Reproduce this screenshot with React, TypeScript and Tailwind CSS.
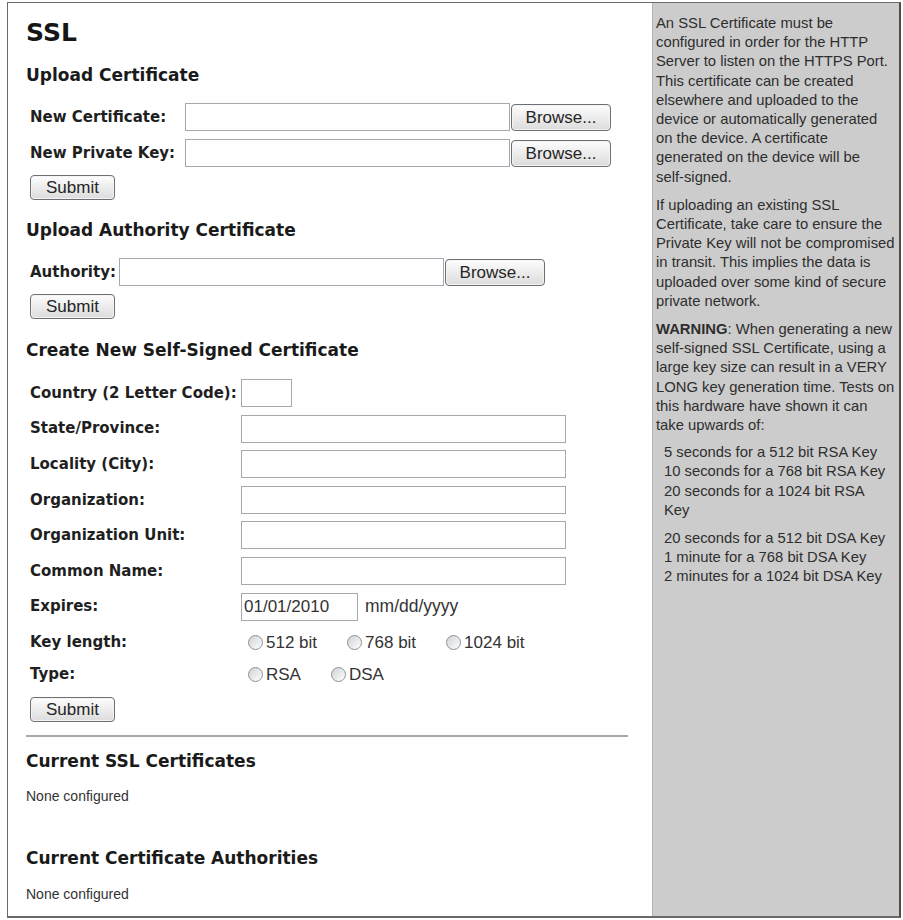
import type { ReactNode } from 'react'

const sans = "font-['Liberation_Sans',Arial,sans-serif]"
const label = "font-['DejaVu_Sans',Verdana,sans-serif] font-bold text-[15px] text-[#1f1f1f] whitespace-nowrap"
const heading = "font-['DejaVu_Sans',Verdana,sans-serif] font-bold text-[17px] leading-[22px] text-[#1a1a1a]"
const field = 'h-[28px] border border-[#a3a9af] bg-white'

function Button({ children, className = '' }: { children: ReactNode; className?: string }) {
  return (
    <button
      type="button"
      className={`${sans} rounded-[4px] border border-[#6c7076] bg-gradient-to-b from-[#fdfdfd] to-[#dcdcdc] text-[17px] leading-none text-[#262626] shadow-[inset_0_0_0_1px_#f4f4f4] ${className}`}
    >
      {children}
    </button>
  )
}

function Radio({ text }: { text: string }) {
  return (
    <span className={`${sans} flex items-center text-[17px] text-[#333]`}>
      <span className="mr-[3px] h-[15px] w-[15px] rounded-full border border-[#8d9298] bg-gradient-to-br from-[#cfd2d5] to-white" />
      {text}
    </span>
  )
}

function FileRow({ name, labelWidth }: { name: string; labelWidth: string }) {
  return (
    <div className="flex h-[28px] items-center">
      <span className={`${label} ${labelWidth}`}>{name}</span>
      <div className={`${field} w-[325px]`} />
      <Button className="ml-[1px] h-[27px] w-[100px]">Browse...</Button>
    </div>
  )
}

// the help panel keeps its own line breaks
function Lines({ lines }: { lines: ReactNode[] }) {
  return (
    <>
      {lines.map((l, i) => (
        <span key={i} className="block whitespace-nowrap">
          {l}
        </span>
      ))}
    </>
  )
}

const certFields = ['State/Province:', 'Locality (City):', 'Organization:', 'Organization Unit:', 'Common Name:']

export default function App() {
  return (
    <div className="min-h-[920px] bg-white pl-[7px] pt-[2px]">
      <div className="flex h-[916px] w-[894px] border border-b-2 border-r-2 border-[#6a6a6a] border-r-[#4d4d4d]">
        <main className="w-[644px] pl-[18px] pr-[24px] pt-[15px]">
          <h1 className="font-['DejaVu_Sans',Verdana,sans-serif] text-[25px] font-bold leading-[30px] text-[#161616]">SSL</h1>

          <h2 className={`${heading} mt-[16px]`}>Upload Certificate</h2>
          <div className="mt-[17px] flex flex-col gap-[8px] pl-[4px]">
            <FileRow name="New Certificate:" labelWidth="w-[155px]" />
            <FileRow name="New Private Key:" labelWidth="w-[155px]" />
          </div>
          <div className="mt-[8px] pl-[4px]">
            <Button className="h-[25px] w-[85px]">Submit</Button>
          </div>

          <h2 className={`${heading} mt-[19px]`}>Upload Authority Certificate</h2>
          <div className="mt-[17px] pl-[4px]">
            <FileRow name="Authority:" labelWidth="w-[89px]" />
          </div>
          <div className="mt-[8px] pl-[4px]">
            <Button className="h-[25px] w-[85px]">Submit</Button>
          </div>

          <h2 className={`${heading} mt-[20px]`}>Create New Self-Signed Certificate</h2>
          <div className="mt-[18px] flex flex-col gap-y-[7.6px] pl-[4px]">
            <div className="flex h-[28px] items-center">
              <span className={`${label} w-[211px]`}>Country (2 Letter Code):</span>
              <div className={`${field} w-[51px]`} />
            </div>
            {certFields.map((f) => (
              <div key={f} className="flex h-[28px] items-center">
                <span className={`${label} w-[211px]`}>{f}</span>
                <div className={`${field} w-[325px]`} />
              </div>
            ))}
            <div className="flex h-[28px] items-center">
              <span className={`${label} w-[211px]`}>Expires:</span>
              <div className={`${field} ${sans} flex w-[117px] items-center pl-[2px] text-[17px] text-[#333]`}>01/01/2010</div>
              <span className={`${sans} ml-[7px] text-[17.5px] text-[#333]`}>mm/dd/yyyy</span>
            </div>
          </div>
          <div className="mt-[10px] flex h-[24px] items-center pl-[4px]">
            <span className={`${label} w-[218px]`}>Key length:</span>
            <div className="flex gap-[30px]">
              <Radio text="512 bit" />
              <Radio text="768 bit" />
              <Radio text="1024 bit" />
            </div>
          </div>
          <div className="mt-[8px] flex h-[24px] items-center pl-[4px]">
            <span className={`${label} w-[218px]`}>Type:</span>
            <div className="flex gap-[30px]">
              <Radio text="RSA" />
              <Radio text="DSA" />
            </div>
          </div>
          <div className="mt-[10px] pl-[4px]">
            <Button className="h-[25px] w-[85px]">Submit</Button>
          </div>

          <hr className="mt-[13px] border-0 border-t-2 border-[#a8a8a8]" />

          <h2 className={`${heading} mt-[13px]`}>Current SSL Certificates</h2>
          <p className={`${sans} mt-[14px] text-[14px] leading-[20px] text-[#333]`}>None configured</p>

          <h2 className={`${heading} mt-[41px]`}>Current Certificate Authorities</h2>
          <p className={`${sans} mt-[15px] text-[14px] leading-[20px] text-[#333]`}>None configured</p>
        </main>

        <aside className={`${sans} w-[247px] border-l border-[#b4b4b4] bg-[#cccccc] pl-[3px] pt-[11px] text-[14.8px] leading-[19.2px] text-[#2e2e2e]`}>
          <p>
            <Lines
              lines={[
                'An SSL Certificate must be',
                'configured in order for the HTTP',
                'Server to listen on the HTTPS Port.',
                'This certificate can be created',
                'elsewhere and uploaded to the',
                'device or automatically generated',
                'on the device. A certificate',
                'generated on the device will be',
                'self-signed.',
              ]}
            />
          </p>
          <p className="mt-[9px]">
            <Lines
              lines={[
                'If uploading an existing SSL',
                'Certificate, take care to ensure the',
                'Private Key will not be compromised',
                'in transit. This implies the data is',
                'uploaded over some kind of secure',
                'private network.',
              ]}
            />
          </p>
          <p className="mt-[9px]">
            <Lines
              lines={[
                <>
                  <b>WARNING</b>: When generating a new
                </>,
                'self-signed SSL Certificate, using a',
                'large key size can result in a VERY',
                'LONG key generation time. Tests on',
                'this hardware have shown it can',
                'take upwards of:',
              ]}
            />
          </p>
          <div className="mt-[8px] pl-[8px]">
            <Lines
              lines={[
                '5 seconds for a 512 bit RSA Key',
                '10 seconds for a 768 bit RSA Key',
                '20 seconds for a 1024 bit RSA',
                'Key',
              ]}
            />
          </div>
          <div className="mt-[9px] pl-[8px]">
            <Lines
              lines={[
                '20 seconds for a 512 bit DSA Key',
                '1 minute for a 768 bit DSA Key',
                '2 minutes for a 1024 bit DSA Key',
              ]}
            />
          </div>
        </aside>
      </div>
    </div>
  )
}
